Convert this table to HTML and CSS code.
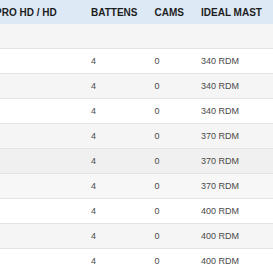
FILE: index.html
```html
<!DOCTYPE html>
<html>
<head>
<meta charset="utf-8">
<link rel="stylesheet" href="styles.css">
</head>
<body>
<table class="spec">
  <colgroup>
    <col class="c-model">
    <col class="c-battens">
    <col class="c-cams">
    <col class="c-mast">
  </colgroup>
  <thead>
    <tr>
      <th>PRO HD / HD</th>
      <th>BATTENS</th>
      <th>CAMS</th>
      <th>IDEAL MAST</th>
    </tr>
  </thead>
  <tbody>
    <tr class="stripe"><td></td><td></td><td></td><td></td></tr>
    <tr><td></td><td>4</td><td>0</td><td>340 RDM</td></tr>
    <tr class="stripe"><td></td><td>4</td><td>0</td><td>340 RDM</td></tr>
    <tr><td></td><td>4</td><td>0</td><td>340 RDM</td></tr>
    <tr class="stripe"><td></td><td>4</td><td>0</td><td>370 RDM</td></tr>
    <tr class="hover"><td></td><td>4</td><td>0</td><td>370 RDM</td></tr>
    <tr class="stripe light"><td></td><td>4</td><td>0</td><td>370 RDM</td></tr>
    <tr><td></td><td>4</td><td>0</td><td>400 RDM</td></tr>
    <tr class="stripe"><td></td><td>4</td><td>0</td><td>400 RDM</td></tr>
    <tr><td></td><td>4</td><td>0</td><td>400 RDM</td></tr>
  </tbody>
</table>
</body>
</html>
```

FILE: styles.css
```css
html, body {
  margin: 0;
  padding: 0;
  overflow: hidden;
  background: #ffffff;
}

.spec {
  margin-left: -5px;
  width: calc(100% + 5px);
  border-collapse: collapse;
  table-layout: fixed;
  font-family: "Liberation Sans", Arial, sans-serif;
}

.c-model { width: 96px; }
.c-battens { width: 63.5px; }
.c-cams { width: 46.5px; }

.spec th {
  height: 24px;
  padding: 0;
  text-align: left;
  font-size: 10px;
  font-weight: bold;
  color: #1e1e1e;
  background: #dde9f5;
  white-space: nowrap;
  vertical-align: middle;
}

.spec td {
  height: 24px;
  padding: 0;
  font-size: 9px;
  color: #4a4a4a;
  border-bottom: 1px solid #e3e3e3;
  vertical-align: middle;
  white-space: nowrap;
}

.spec tr.stripe td { background: #f5f5f5; }
.spec tr.stripe.light td { background: #f7f7f7; }
.spec tr.hover td { background: #f0f0f0; }
```
